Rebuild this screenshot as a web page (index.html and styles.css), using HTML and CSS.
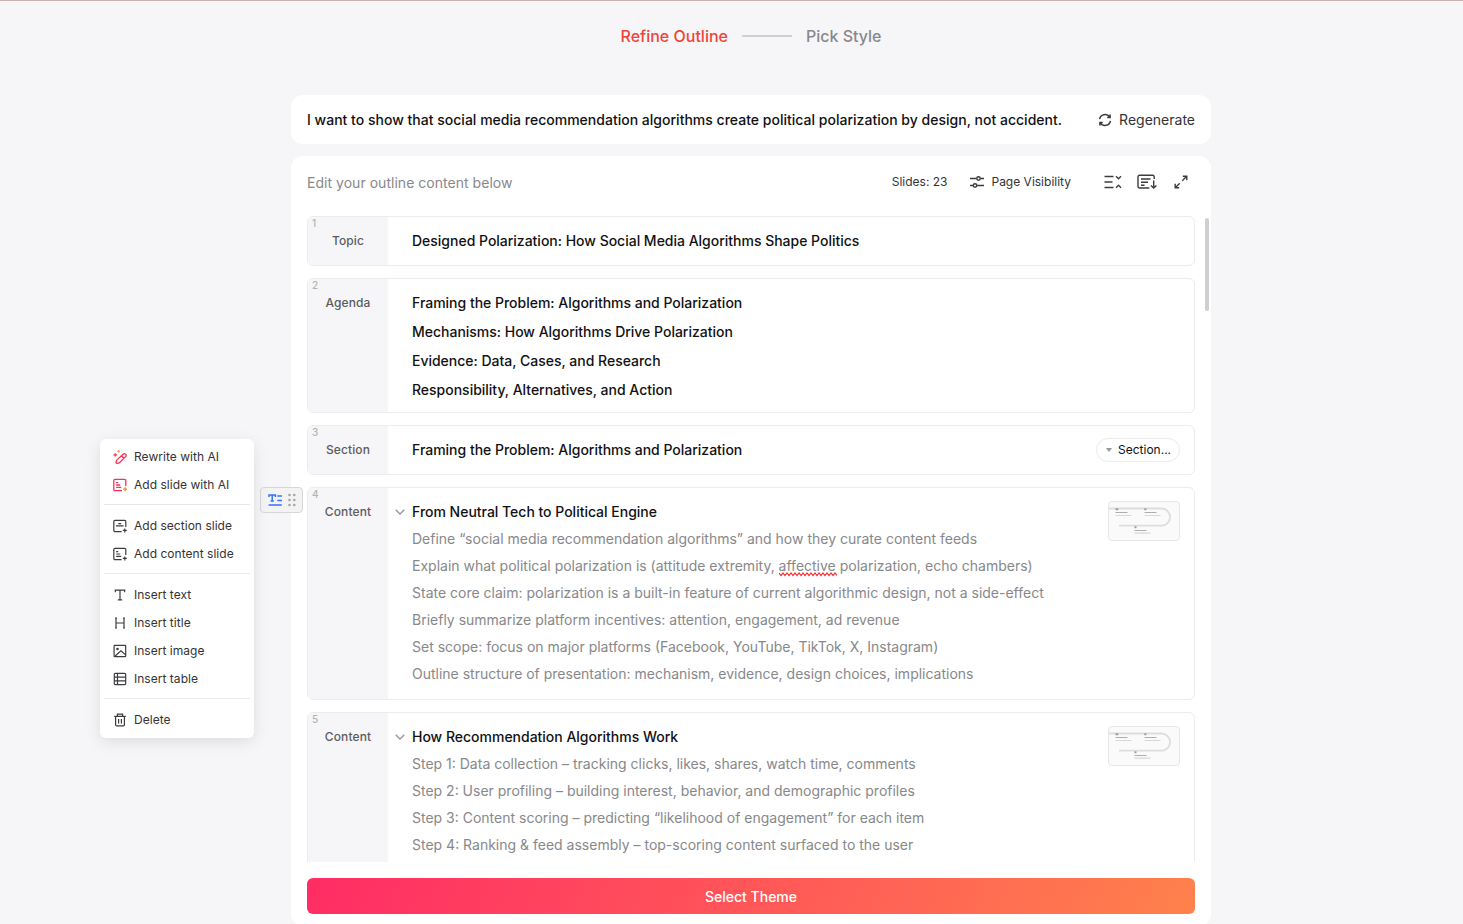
FILE: index.html
```html
<!DOCTYPE html>
<html lang="en">
<head>
    <meta charset="UTF-8" />
    <meta name="viewport" content="width=device-width, initial-scale=1">
    <title>Refine Outline</title>
    <link rel="stylesheet" href="styles.css">
</head>
<body>
<nav class="steps">
    <span class="step active">Refine Outline</span>
    <span class="step-line"></span>
    <span class="step">Pick Style</span>
</nav>

<main class="container">
    <section class="prompt">
        <h1>I want to show that social media recommendation algorithms create political polarization by design, not accident.</h1>
        <button class="regenerate">
            <svg width="14" height="14" viewBox="0 0 14 14"><path d="M1.6 6.2A5.4 5.4 0 0 1 11.6 4.2M12.4 7.8A5.4 5.4 0 0 1 2.4 9.8M12.1 1.6v3H9.2M1.9 12.4v-3h2.9"/></svg>
            Regenerate
        </button>
    </section>

    <section class="panel">
        <header class="toolbar">
            <span class="hint">Edit your outline content below</span>
            <span class="count">Slides: 23</span>
            <button class="visibility">
                <svg width="16" height="14" viewBox="0 0 16 14"><path d="M1 3.5h6.8M11.2 3.5H15M1 10.5h3.3M7.7 10.5H15"/><circle cx="9.5" cy="3.5" r="1.7"/><circle cx="6" cy="10.5" r="1.7"/></svg>
                Page Visibility
            </button>
            <div class="tools">
                <svg width="18" height="14" viewBox="0 0 18 14"><path d="M.5 1.5h9M.5 7h8M.5 12.5h9M12 1.3l2.5 2.4L17 1.3M12 12.7l2.5-2.4 2.5 2.4"/></svg>
                <svg width="20" height="16" viewBox="0 0 20 16"><path d="M17.2 5V2.7a1.5 1.5 0 0 0-1.5-1.5H2.5A1.5 1.5 0 0 0 1 2.7v9.8A1.5 1.5 0 0 0 2.5 14h9.8M4 5h9.5M4 8.2h7M4 11.2h3.5M16.7 6.5v7.3M14 11.4l2.7 2.7 2.7-2.7"/></svg>
                <svg width="14" height="14" viewBox="0 0 14 14"><path d="M8.3 5.7L12.7 1.3M8.8 1.2h4v4M5.7 8.3L1.3 12.7M1.2 8.8v4h4"/></svg>
            </div>
        </header>

        <div class="slides">
            <article class="slide">
                <div class="label"><i>1</i>Topic</div>
                <div class="body">
                    <h2>Designed Polarization: How Social Media Algorithms Shape Politics</h2>
                </div>
            </article>

            <article class="slide">
                <div class="label"><i>2</i>Agenda</div>
                <div class="body agenda">
                    <h2>Framing the Problem: Algorithms and Polarization</h2>
                    <h2>Mechanisms: How Algorithms Drive Polarization</h2>
                    <h2>Evidence: Data, Cases, and Research</h2>
                    <h2>Responsibility, Alternatives, and Action</h2>
                </div>
            </article>

            <article class="slide">
                <div class="label"><i>3</i>Section</div>
                <div class="body">
                    <h2>Framing the Problem: Algorithms and Polarization</h2>
                </div>
                <button class="pill"><span class="caret"></span>Section...</button>
            </article>

            <article class="slide">
                <div class="label"><i>4</i>Content</div>
                <div class="body content">
                    <h2><svg class="chevron" width="10" height="6" viewBox="0 0 10 6"><path d="M.7.8L5 5 9.3.8"/></svg>From Neutral Tech to Political Engine</h2>
                    <p>Define “social media recommendation algorithms” and how they curate content feeds</p>
                    <p>Explain what political polarization is (attitude extremity, <span class="misspelled">affective<svg width="58" height="5"><use href="#squiggle"/></svg></span> polarization, echo chambers)</p>
                    <p>State core claim: polarization is a built-in feature of current algorithmic design, not a side-effect</p>
                    <p>Briefly summarize platform incentives: attention, engagement, ad revenue</p>
                    <p>Set scope: focus on major platforms (Facebook, YouTube, TikTok, X, Instagram)</p>
                    <p>Outline structure of presentation: mechanism, evidence, design choices, implications</p>
                </div>
                <svg class="thumb" width="70" height="38" viewBox="0 0 70 38"><use href="#layout"/></svg>
            </article>

            <article class="slide">
                <div class="label"><i>5</i>Content</div>
                <div class="body content">
                    <h2><svg class="chevron" width="10" height="6" viewBox="0 0 10 6"><path d="M.7.8L5 5 9.3.8"/></svg>How Recommendation Algorithms Work</h2>
                    <p>Step 1: Data collection – tracking clicks, likes, shares, watch time, comments</p>
                    <p>Step 2: User profiling – building interest, behavior, and demographic profiles</p>
                    <p>Step 3: Content scoring – predicting “likelihood of engagement” for each item</p>
                    <p>Step 4: Ranking &amp; feed assembly – top-scoring content surfaced to the user</p>
                    <p></p>
                </div>
                <svg class="thumb" width="70" height="38" viewBox="0 0 70 38"><use href="#layout"/></svg>
            </article>
        </div>
        <div class="scrollbar"></div>

        <button class="submit">Select Theme</button>
    </section>
</main>

<div class="handle">
    <svg width="14" height="14" viewBox="0 0 14 14"><path class="blue" d="M1 4V2h6.4v2M4.2 2v6M2.6 8h3.2M9.3 3H14M9.3 7.5H14M.6 12h13.2"/></svg>
    <svg class="dots" width="8" height="14" viewBox="0 0 8 14"><circle cx="1.5" cy="2" r="1.3"/><circle cx="6.3" cy="2" r="1.3"/><circle cx="1.5" cy="7" r="1.3"/><circle cx="6.3" cy="7" r="1.3"/><circle cx="1.5" cy="12" r="1.3"/><circle cx="6.3" cy="12" r="1.3"/></svg>
</div>

<ul class="menu">
    <li><svg width="14" height="14" viewBox="0 0 14 14"><path class="red" d="M3.3 13.2c-.5-1.6 0-2.7.9-3.6l5.9-5.4a1.7 1.7 0 0 1 2.5 0 1.7 1.7 0 0 1 0 2.4l-5.7 5.6c-.9.9-2 1.3-3.6 1zM8.6 5.8l2.3 2.4M2.2 3.2v3.4M.4 4.9H4"/><path class="orange" d="M5.6.2v2.4M4.4 1.4h2.4"/></svg>Rewrite with AI</li>
    <li><svg width="14" height="14" viewBox="0 0 14 14"><path class="red" d="M12.8 8V2.6a1.2 1.2 0 0 0-1.2-1.2H2A1.2 1.2 0 0 0 .8 2.6v8.8A1.2 1.2 0 0 0 2 12.6h7M3.2 4.6h2M3.2 7h4M3.2 9.4h5"/><path class="orange" d="M12.2 9.3v4M10.2 11.3h4"/></svg>Add slide with AI</li>
    <li class="divider"></li>
    <li><svg width="14" height="14" viewBox="0 0 14 14"><path d="M12.8 8V2.6a1.2 1.2 0 0 0-1.2-1.2H2A1.2 1.2 0 0 0 .8 2.6v1.6M.8 9v2.4A1.2 1.2 0 0 0 2 12.6h6.6M.8 4v5.5M3 6.8h7.5M5.3 4.6h2.8M11.8 9.4v4M9.8 11.4h4"/></svg>Add section slide</li>
    <li><svg width="14" height="14" viewBox="0 0 14 14"><path d="M12.8 8V2.6a1.2 1.2 0 0 0-1.2-1.2H2A1.2 1.2 0 0 0 .8 2.6v8.8A1.2 1.2 0 0 0 2 12.6h6.6M3.2 4.6h2M3.2 7h4M3.2 9.4h5M11.8 9.4v4M9.8 11.4h4"/></svg>Add content slide</li>
    <li class="divider"></li>
    <li><svg width="14" height="14" viewBox="0 0 14 14"><path d="M2.3 4.2V2.1h9.4v2.1M7 2.1v9.8M4.8 11.9h4.4"/></svg>Insert text</li>
    <li><svg width="14" height="14" viewBox="0 0 14 14"><path d="M3 2v10M11 2v10M3 7h8M2 2h2M2 12h2M10 2h2M10 12h2"/></svg>Insert title</li>
    <li><svg width="14" height="14" viewBox="0 0 14 14"><rect x="1.1" y="1.4" width="11.6" height="11.3" rx=".8"/><circle cx="4.5" cy="5" r=".7"/><path d="M2.2 12l5.7-5.1 4.7 4"/></svg>Insert image</li>
    <li><svg width="14" height="14" viewBox="0 0 14 14"><rect x="1.3" y="1.4" width="11.4" height="11.2" rx="1"/><path d="M4.5 1.4v11.2M1.3 5.1h11.4M1.3 8.9h11.4"/></svg>Insert table</li>
    <li class="divider"></li>
    <li><svg width="14" height="14" viewBox="0 0 14 14"><path d="M1.2 3.4h11.6M4.4 3.4V1.2h5.2v2.2M2.6 3.4v8.3a1.2 1.2 0 0 0 1.2 1.2h6.4a1.2 1.2 0 0 0 1.2-1.2V3.4M5.6 6v4.4M8.4 6v4.4"/></svg>Delete</li>
</ul>

<!-- shared shapes -->
<svg class="defs" width="0" height="0">
    <symbol id="layout" viewBox="0 0 70 38">
        <path d="M0 6.5h52.5a8.5 8.5 0 0 1 0 17.2H10" fill="none" stroke="#dddde1" stroke-width="1.8"/>
        <path d="M6.5 10.5h12M35.5 10.5h12M25.5 28.5h12" stroke="#aeaeb0" stroke-width="1.2"/>
        <path d="M6.5 13.5h16M35.5 13.5h16M25.5 31.2h16" stroke="#d8d8da" stroke-width="1.2"/>
        <path d="M6.5 7.3h2.8M35.3 7.3h2M25.5 25.3h2" stroke="#9c9ca0" stroke-width="2"/>
    </symbol>
    <symbol id="squiggle">
        <path d="M0 1l2 2.5 2-2.5 2 2.5 2-2.5 2 2.5 2-2.5 2 2.5 2-2.5 2 2.5 2-2.5 2 2.5 2-2.5 2 2.5 2-2.5 2 2.5 2-2.5 2 2.5 2-2.5 2 2.5 2-2.5 2 2.5 2-2.5 2 2.5 2-2.5 2 2.5 2-2.5 2 2.5 2-2.5 2 2.5" fill="none" stroke="#f02c2c" stroke-width="1.2"/>
    </symbol>
</svg>
</body>
</html>
```
FILE: styles.css
```css
:root {
    --bg: #f6f6f9;
    --fg: #111113;
    --fg-mid: #333336;
    --muted: #87888b;
    --border: #ececef;
    --red: #ff2e56;
    --orange: #ff9022;
    --radius: 12px;
}
* { margin: 0; padding: 0; box-sizing: border-box; }
body {
    font-family: Inter, 'Liberation Sans', sans-serif;
    font-size: 14px;
    line-height: 20px;
    height: 924px;
    overflow: hidden;
    position: relative;
    background: var(--bg);
    color: var(--fg);
    border-top: 1px solid #c9b2af;
}
button {
    font: inherit;
    color: inherit;
    border: none;
    background: none;
    cursor: pointer;
}
svg {
    fill: none;
    stroke: #3c3c40;
    stroke-width: 1.2;
    flex: none;
}
.defs { position: absolute; }
.steps {
    display: flex;
    justify-content: center;
    align-items: center;
    gap: 14px;
    height: 70px;
    margin-left: 39px;
    font-size: 16px;
    font-weight: 500;
    color: var(--muted);
}
.step.active { color: #f04438; }
.step-line {
    width: 50px;
    height: 2px;
    background: #d0d0d3;
}
.container {
    width: 920px;
    margin: 24px 0 0 291px;
}
.prompt {
    display: flex;
    justify-content: space-between;
    align-items: center;
    height: 49px;
    padding: 0 16px;
    margin-bottom: 12px;
    background: #fff;
    border-radius: var(--radius);
}
.prompt h1 {
    font-size: 14px;
    font-weight: 500;
    letter-spacing: 0.012px;
    white-space: nowrap;
}
.regenerate {
    display: flex;
    align-items: center;
    gap: 7px;
    color: var(--fg-mid);
}
.regenerate svg { stroke-width: 1.5; }
.panel {
    position: relative;
    height: 770px;
    padding: 0 16px;
    background: #fff;
    border-radius: var(--radius);
}
.toolbar {
    display: flex;
    align-items: center;
    height: 52px;
    margin-bottom: 8px;
    font-size: 12px;
    color: var(--fg-mid);
}
.hint {
    flex: 1;
    padding-top: 2px;
    font-size: 14px;
    letter-spacing: 0.03px;
    color: var(--muted);
}
.visibility {
    display: flex;
    align-items: center;
    gap: 6px;
    margin-left: 22px;
}
.visibility svg { stroke-width: 1.4; }
.tools {
    display: flex;
    align-items: center;
    margin: 0 7px 0 33px;
}
.tools svg {
    margin-left: 15px;
    stroke-width: 1.4;
}
.tools svg:first-child { margin-left: 0; }
.tools svg:last-child { margin-left: 17px; }
.slides {
    height: 646px;
    overflow: hidden;
}
.slide {
    position: relative;
    display: flex;
    border: 1px solid var(--border);
    border-radius: 6px;
    margin-bottom: 12px;
    overflow: hidden;
}
.label {
    position: relative;
    width: 80px;
    padding-top: 14px;
    text-align: center;
    font-size: 12px;
    font-weight: 500;
    letter-spacing: 0.1px;
    background: var(--bg);
    color: #5c5c60;
}
.label i {
    position: absolute;
    top: 0;
    left: 4px;
    font-size: 10px;
    line-height: 12px;
    font-style: normal;
    color: #b2b2b6;
}
.body {
    flex: 1;
    padding: 14px 24px;
    white-space: nowrap;
}
.body h2 {
    font-size: 14px;
    font-weight: 500;
    letter-spacing: -0.012px;
    position: relative;
}
.body p { color: var(--muted); }
.agenda {
    display: grid;
    gap: 9px;
    padding-bottom: 12px;
}
.content {
    display: grid;
    gap: 7px;
    padding-bottom: 15px;
}
.chevron {
    position: absolute;
    left: -17px;
    top: 7px;
    stroke: #98989c;
    stroke-width: 1.4;
}
.misspelled { position: relative; }
.misspelled svg {
    position: absolute;
    left: 0;
    top: 15px;
}
.pill {
    display: flex;
    align-items: center;
    gap: 6px;
    height: 24px;
    width: 84px;
    margin: 12px 14px 0 0;
    padding-left: 9px;
    border: 1px solid var(--border);
    border-radius: 12px;
    font-size: 12px;
}
.caret {
    border: 3px solid transparent;
    border-top: 4px solid #98989c;
    border-bottom: 0;
}
.thumb {
    box-sizing: content-box;
    margin: 13px 14px 0 0;
    background: #fafafa;
    border: 1px solid #e6e6e9;
    border-radius: 4px;
}
.scrollbar {
    position: absolute;
    top: 62px;
    right: 2px;
    width: 4px;
    height: 93px;
    border-radius: 2px;
    background: #cfcfd1;
}
.submit {
    display: block;
    width: 100%;
    height: 36px;
    margin-top: 16px;
    padding-top: 2px;
    border-radius: 6px;
    background: linear-gradient(110deg, #ff2c65, #ff814c);
    color: #fff;
    font-weight: 500;
}
.handle {
    position: absolute;
    top: 486px;
    left: 260px;
    display: flex;
    align-items: center;
    gap: 6px;
    width: 43px;
    height: 26px;
    padding-left: 7px;
    background: #f3f3f4;
    border: 1px solid #d7d7da;
    border-radius: 4px;
}
.handle .blue {
    stroke: #3370ff;
    stroke-width: 1.5;
}
.dots {
    fill: #a4a4a7;
    stroke: none;
}
.menu {
    position: absolute;
    top: 438px;
    left: 100px;
    width: 154px;
    padding: 4px;
    list-style: none;
    font-size: 12px;
    letter-spacing: 0.03px;
    color: var(--fg-mid);
    background: #fff;
    border-radius: 6px;
    box-shadow: 0 4px 16px rgba(0, 0, 0, 0.1);
}
.menu li {
    display: flex;
    align-items: center;
    gap: 7px;
    height: 28px;
    padding-left: 9px;
    white-space: nowrap;
}
.menu .divider {
    height: 1px;
    margin: 5px 0 7px;
    background: #e8e8ea;
}
.menu .red {
    stroke: var(--red);
    stroke-width: 1.3;
}
.menu .orange {
    stroke: var(--orange);
    stroke-width: 1.4;
}
```
